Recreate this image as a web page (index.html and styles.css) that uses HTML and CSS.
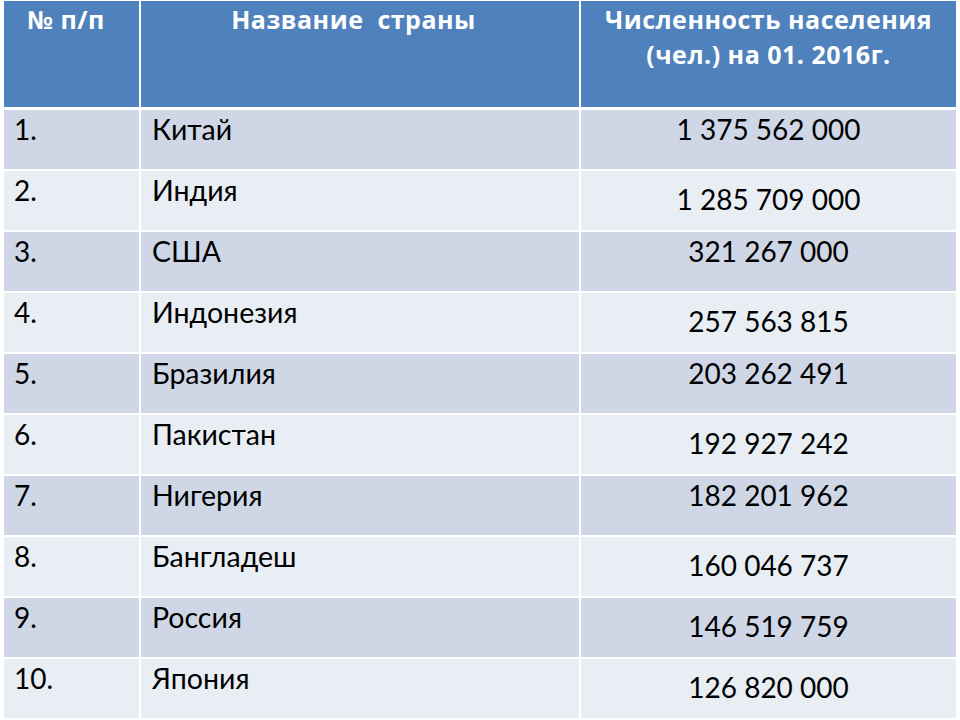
FILE: index.html
```html
<!DOCTYPE html>
<html lang="ru">
<head>
<meta charset="utf-8">
<title>Численность населения</title>
<link rel="stylesheet" href="styles.css">
</head>
<body>
<div class="table">
  <div class="hd hd-num">№ п/п</div>
  <div class="hd hd-name">Название&nbsp; страны</div>
  <div class="hd hd-pop">Численность населения<br>(чел.) на 01. 2016г.</div>

  <div class="c num dark">1.</div><div class="c name dark">Китай</div><div class="c pop dark">1 375 562 000</div>
  <div class="c num light">2.</div><div class="c name light">Индия</div><div class="c pop light low">1 285 709 000</div>
  <div class="c num dark">3.</div><div class="c name dark">США</div><div class="c pop dark">321 267 000</div>
  <div class="c num light">4.</div><div class="c name light">Индонезия</div><div class="c pop light low">257 563 815</div>
  <div class="c num dark">5.</div><div class="c name dark">Бразилия</div><div class="c pop dark">203 262 491</div>
  <div class="c num light">6.</div><div class="c name light">Пакистан</div><div class="c pop light low">192 927 242</div>
  <div class="c num dark">7.</div><div class="c name dark">Нигерия</div><div class="c pop dark">182 201 962</div>
  <div class="c num light">8.</div><div class="c name light">Бангладеш</div><div class="c pop light low">160 046 737</div>
  <div class="c num dark">9.</div><div class="c name dark">Россия</div><div class="c pop dark low">146 519 759</div>
  <div class="c num light">10.</div><div class="c name light">Япония</div><div class="c pop light low">126 820 000</div>
</div>
</body>
</html>
```
FILE: styles.css
```css
html, body {
  margin: 0;
  padding: 0;
  background: #ffffff;
}
body {
  width: 960px;
  height: 720px;
  overflow: hidden;
  font-family: Lato, "Open Sans", "Liberation Sans", sans-serif;
}
.table {
  display: grid;
  grid-template-columns: 135px 438px 375px;
  grid-template-rows: 107px repeat(10, 59px);
  column-gap: 2px;
  row-gap: 2px;
  margin: 1px 0 0 4px;
}
.hd {
  background: #4f81bd;
  color: #ffffff;
  font-family: "Open Sans", Lato, sans-serif;
  font-weight: 700;
  font-size: 25px;
  letter-spacing: 0.5px;
  line-height: 34.5px;
  padding-top: 1px;
  text-align: center;
  box-sizing: border-box;
  margin-bottom: 1px;
}
.hd-num { padding-right: 11px; }
.hd-name { padding-right: 13px; }
.c {
  font-size: 28px;
  line-height: 34px;
  color: #000000;
  padding-top: 2px;
  box-sizing: border-box;
}
.name { font-size: 28.5px; }
.dark { background: #cfd7e6; }
.light { background: #e9edf4; }
.num { padding-left: 10px; }
.name { padding-left: 11px; }
.pop { text-align: center; }
.low { padding-top: 11px; }
```
